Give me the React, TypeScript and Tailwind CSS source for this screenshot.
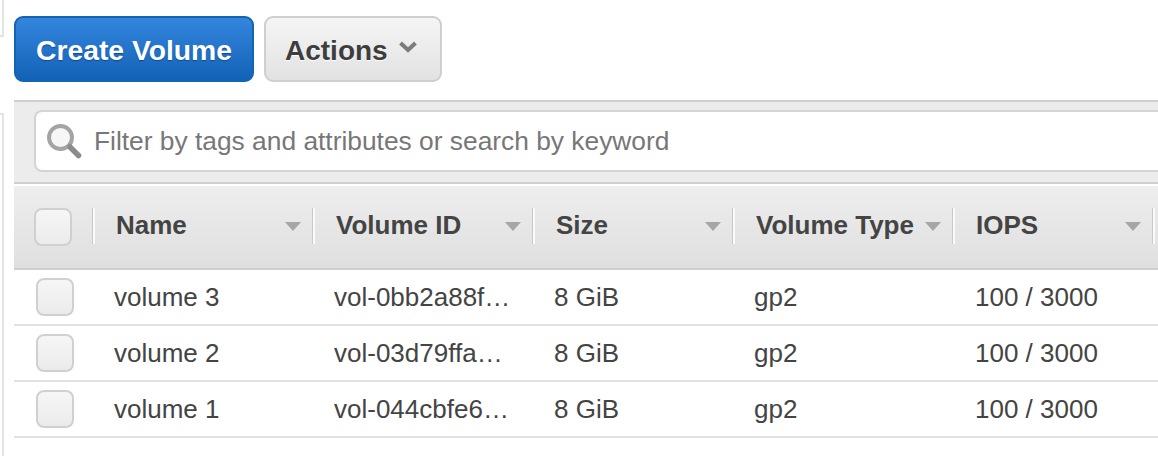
const columns = [
  { label: 'Name', width: 'w-[220px]' },
  { label: 'Volume ID', width: 'w-[220px]' },
  { label: 'Size', width: 'w-[200px]' },
  { label: 'Volume Type', width: 'w-[220px]' },
  { label: 'IOPS', width: 'w-[200px]' },
];

const rows = [
  { name: 'volume 3', id: 'vol-0bb2a88f…' },
  { name: 'volume 2', id: 'vol-03d79ffa…' },
  { name: 'volume 1', id: 'vol-044cbfe6…' },
];

function Checkbox() {
  return <div className="w-[38px] h-[38px] rounded-[8px] border-2 border-[#d0d0d0] bg-gradient-to-b from-[#f6f6f6] to-[#ebebeb]" />;
}

function SearchIcon() {
  return (
    <svg width="36" height="36" viewBox="0 0 36 36" fill="none">
      <circle cx="14.5" cy="14.5" r="11.5" stroke="#a4a4a4" strokeWidth="4" fill="#f6f6f6" />
      <path d="M24 24 L32.5 32.5" stroke="#8c8c8c" strokeWidth="5.5" strokeLinecap="round" />
    </svg>
  );
}

function SortCaret() {
  return (
    <svg width="16" height="10" viewBox="0 0 16 10">
      <path d="M0 1 H16 L8 10 Z" fill="#a6a6a6" />
    </svg>
  );
}

function ActionsChevron() {
  return (
    <svg width="18" height="12" viewBox="0 0 18 12" fill="none">
      <path d="M1.5 2 L9 9 L16.5 2" stroke="#7c7c7c" strokeWidth="4" />
    </svg>
  );
}

export default function App() {
  return (
    <div className="flex w-[1158px] h-[456px] overflow-hidden bg-white font-['Liberation_Sans',Arial,sans-serif]">
      {/* sliver of the side panel */}
      <div className="w-[14px] shrink-0 flex flex-col">
        <div className="w-[4px] h-[37px] border-r-2 border-b-2 border-[#e4e4e4]" />
        <div className="w-[4px] flex-1 mt-[76px] border-r-2 border-t-2 border-[#e4e4e4]" />
      </div>

      <div className="flex-1 min-w-0 flex flex-col">
        {/* toolbar */}
        <div className="flex gap-[10px] pt-[16px] h-[100px] shrink-0">
          <button className="w-[240px] h-[66px] pt-[2px] rounded-[9px] border-2 border-[#1464b4] bg-gradient-to-b from-[#3386dc] to-[#1262b8] text-white font-bold text-[28.3px] [text-shadow:0_1px_1px_#0c4a94]">
            Create Volume
          </button>
          <button className="w-[178px] h-[66px] pt-[3px] rounded-[9px] border-2 border-[#cfcfcf] bg-gradient-to-b from-[#f5f5f5] to-[#e2e2e2] text-[#3d3d3d] font-bold text-[28px] flex items-center pl-[19px] gap-[11px] [text-shadow:0_1px_0_#ffffff]">
            Actions
            <span className="-mt-[8px]">
              <ActionsChevron />
            </span>
          </button>
        </div>

        {/* filter band */}
        <div className="h-[84px] shrink-0 bg-[#ececec] border-t-2 border-b-2 border-[#cfcfcf] pl-[20px] pt-[8px]">
          <div className="h-[62px] rounded-l-[8px] bg-white border-2 border-r-0 border-[#d4d4d4] flex items-center pl-[10px] gap-[12px]">
            <SearchIcon />
            <span className="text-[26.35px] text-[#777777] pt-[1px]">Filter by tags and attributes or search by keyword</span>
          </div>
        </div>

        {/* table head */}
        <div className="mt-[2px] h-[84px] shrink-0 flex bg-gradient-to-b from-[#eeeeee] to-[#dfdfdf] border-b-2 border-[#cfcfcf]">
          <div className="w-[78px] shrink-0 pl-[20px] pt-[22px]">
            <Checkbox />
          </div>
          {columns.map((col) => (
            <div key={col.label} className={`${col.width} shrink-0 flex mt-[22px] h-[36px] items-center border-l border-[#c9c9c9] shadow-[inset_2px_0_0_#fafafa] pl-[23px] pr-[11px] justify-between`}>
              <span className="text-[26px] font-bold text-[#444444] whitespace-nowrap -mt-[2px]">{col.label}</span>
              <SortCaret />
            </div>
          ))}
          <div className="w-[3px] shrink-0 mt-[22px] h-[36px] border-l border-[#c9c9c9] shadow-[inset_2px_0_0_#fafafa]" />
        </div>

        {/* rows */}
        {rows.map((row) => (
          <div key={row.name} className="h-[56px] shrink-0 flex items-center border-b-2 border-[#e2e2e2] text-[26px] text-[#444444]">
            <div className="w-[100px] shrink-0 pl-[22px]">
              <Checkbox />
            </div>
            <div className="w-[220px] shrink-0">{row.name}</div>
            <div className="w-[220px] shrink-0">{row.id}</div>
            <div className="w-[200px] shrink-0">8 GiB</div>
            <div className="w-[221px] shrink-0">gp2</div>
            <div className="whitespace-nowrap">100 / 3000</div>
          </div>
        ))}
      </div>
    </div>
  );
}
